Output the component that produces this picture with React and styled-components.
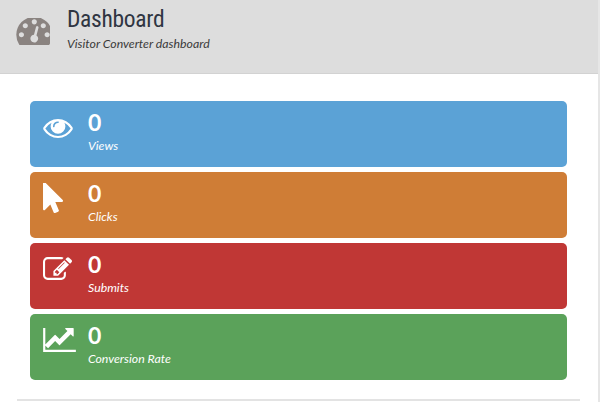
import styled, { createGlobalStyle } from "styled-components";

const GlobalStyle = createGlobalStyle`
  html, body {
    margin: 0;
    padding: 0;
    height: 100%;
    overflow: hidden;
    background: #fff;
    font-family: "Lato", "Liberation Sans", sans-serif;
  }
`;

const Page = styled.div`
  width: 600px;
  height: 402px;
  box-sizing: border-box;
  border-right: 2px solid #e6e6e6;
  display: flex;
  flex-direction: column;
`;

const Header = styled.header`
  height: 74px;
  box-sizing: border-box;
  flex: none;
  background: #dddddd;
  border-bottom: 1px solid #d2d2d2;
  display: flex;
  align-items: flex-start;
  padding: 18px 0 0 16px;
`;

const Glyph = styled.svg`
  display: block;
  flex: none;
  fill: currentColor;
`;

const HeaderIcon = styled.div`
  width: 51px;
  flex: none;
  color: #8a8380;
`;

const HeaderText = styled.div`
  margin-top: -13px;
`;

const Title = styled.h1`
  margin: 0;
  font-family: "Roboto", sans-serif;
  font-size: 23.5px;
  line-height: 28px;
  font-weight: 400;
  font-stretch: 75%;
  letter-spacing: -0.3px;
  color: #2f3542;
`;

const Subtitle = styled.p`
  margin: 3px 0 0;
  font-size: 12.3px;
  line-height: 16px;
  font-style: italic;
  color: #3a3a3a;
`;

const Cards = styled.main`
  display: flex;
  flex-direction: column;
  gap: 5px;
  padding: 27px 0 0 30px;
  width: 537px;
`;

const Card = styled.section`
  height: 66px;
  border-radius: 5px;
  background: ${props => props.$color};
  color: #fff;
  display: flex;
`;

const CardIcon = styled.div`
  width: 58px;
  flex: none;
  padding: ${props => props.$top}px 0 0 13px;
  box-sizing: border-box;
`;

const CardBody = styled.div`
  display: flex;
  flex-direction: column;
`;

const Value = styled.div`
  margin-top: 8px;
  font-size: 23px;
  line-height: 26px;
  font-weight: 700;
`;

const Label = styled.div`
  margin-top: 2px;
  font-size: 12.3px;
  line-height: 18px;
  font-style: italic;
`;

const Divider = styled.hr`
  margin: 19px 0 0 17px;
  width: 563px;
  border: 0;
  border-top: 2px solid #e3e3e3;
`;

const GAUGE = "M384 1152q0-53-37.500-90.500t-90.500-37.500-90.500 37.500-37.500 90.500 37.500 90.500 90.500 37.500 90.500-37.500 37.500-90.500zm192-448q0-53-37.500-90.500t-90.500-37.500-90.500 37.500-37.500 90.500 37.500 90.500 90.500 37.500 90.500-37.500 37.500-90.500zm428 481l101-382q6-26-7.500-48.500t-38.500-29.500-48 6.500-30 39.500l-101 382q-60 5-107 43.500t-63 98.500q-20 77 20 146t117 89 146-20 89-117q16-60-6-117t-72-91zm660-33q0-53-37.500-90.500t-90.500-37.500-90.500 37.500-37.500 90.500 37.500 90.500 90.500 37.500 90.500-37.500 37.500-90.500zm-640-640q0-53-37.500-90.500t-90.500-37.500-90.500 37.500-37.500 90.500 37.500 90.500 90.500 37.500 90.500-37.500 37.500-90.500zm448 192q0-53-37.500-90.500t-90.500-37.500-90.500 37.500-37.500 90.500 37.500 90.500 90.500 37.500 90.500-37.500 37.500-90.500zm320 448q0 261-141 483-19 29-54 29h-1402q-35 0-54-29-141-221-141-483 0-182 71-348t191-286 286-191 348-71 348 71 286 191 191 286 71 348z";
const EYE = "M1664 960q-152-236-381-353 61 104 61 225 0 185-131.500 316.500t-316.500 131.500-316.500-131.500-131.500-316.500q0-121 61-225-229 117-381 353 133 205 333.500 326.500t434.500 121.500 434.500-121.500 333.500-326.500zm-720-384q0-20-14-34t-34-14q-125 0-214.500 89.500t-89.500 214.500q0 20 14 34t34 14 34-14 14-34q0-86 61-147t147-61q20 0 34-14t14-34zm848 384q0 34-20 69-140 230-376.500 368.500t-499.500 138.500-499.500-139-376.500-368q-20-35-20-69t20-69q140-229 376.500-368t499.500-139 499.500 139 376.500 368q20 35 20 69z";
const POINTER = "M1389 1043q31 30 14 69-17 40-59 40h-382l201 476q10 25 0 49t-34 35l-177 75q-25 10-49 0t-35-34l-191-452-312 312q-19 19-45 19-12 0-24-5-40-17-40-59v-1504q0-42 40-59 12-5 24-5 27 0 45 19z";
const EDIT = "M888 1184l116-116-152-152-116 116v56h96v96h56zm440-720q-16-16-33 1l-350 350q-17 17-1 33t33-1l350-350q17-17 1-33zm80 594v190q0 119-84.500 203.500t-203.500 84.500h-832q-119 0-203.500-84.500t-84.500-203.500v-832q0-119 84.500-203.500t203.500-84.500h832q63 0 117 25 15 7 18 23 3 17-9 29l-49 49q-14 14-32 8-23-6-45-6h-832q-66 0-113 47t-47 113v832q0 66 47 113t113 47h832q66 0 113-47t47-113v-126q0-13 9-22l64-64q15-15 35-7t20 29zm-96-738l288 288-672 672h-288v-288zm444 132l-92 92-288-288 92-92q28-28 68-28t68 28l152 152q28 28 28 68t-28 68z";
const CHART = "M1920 1536v128h-1920v-1408h128v1280h1792zm-128-1248v435q0 21-19.500 29.500t-35.500-7.500l-121-121-633 633q-10 10-23 10t-23-10l-233-233-416 416-192-192 585-585q10-10 23-10t23 10l233 233 464-464-121-121q-16-16-7.500-35.500t29.500-19.500h435q14 0 23 9t9 23z";

const stats = [
  { label: "Views", color: "#5ba2d6", path: EYE, box: "0 384 1792 1152", w: 30, h: 19, top: 18 },
  { label: "Clicks", color: "#cf7d36", path: POINTER, box: "256 64 1147 1723", w: 20, h: 30, top: 11 },
  { label: "Submits", color: "#c03735", path: EDIT, box: "0 128 1784 1408", w: 29, h: 23, top: 14 },
  { label: "Conversion Rate", color: "#5ba25a", path: CHART, box: "0 256 1920 1408", w: 33, h: 24, top: 14 },
];

export default function App() {
  return (
    <Page>
      <GlobalStyle />
      <Header>
        <HeaderIcon>
          <Glyph viewBox="0 320 1664 1344" width="34" height="27"><path d={GAUGE} /></Glyph>
        </HeaderIcon>
        <HeaderText>
          <Title>Dashboard</Title>
          <Subtitle>Visitor Converter dashboard</Subtitle>
        </HeaderText>
      </Header>
      <Cards>
        {stats.map(({ label, color, path, box, w, h, top }) => (
          <Card key={label} $color={color}>
            <CardIcon $top={top}>
              <Glyph viewBox={box} width={w} height={h}><path d={path} /></Glyph>
            </CardIcon>
            <CardBody>
              <Value>0</Value>
              <Label>{label}</Label>
            </CardBody>
          </Card>
        ))}
      </Cards>
      <Divider />
    </Page>
  );
}
